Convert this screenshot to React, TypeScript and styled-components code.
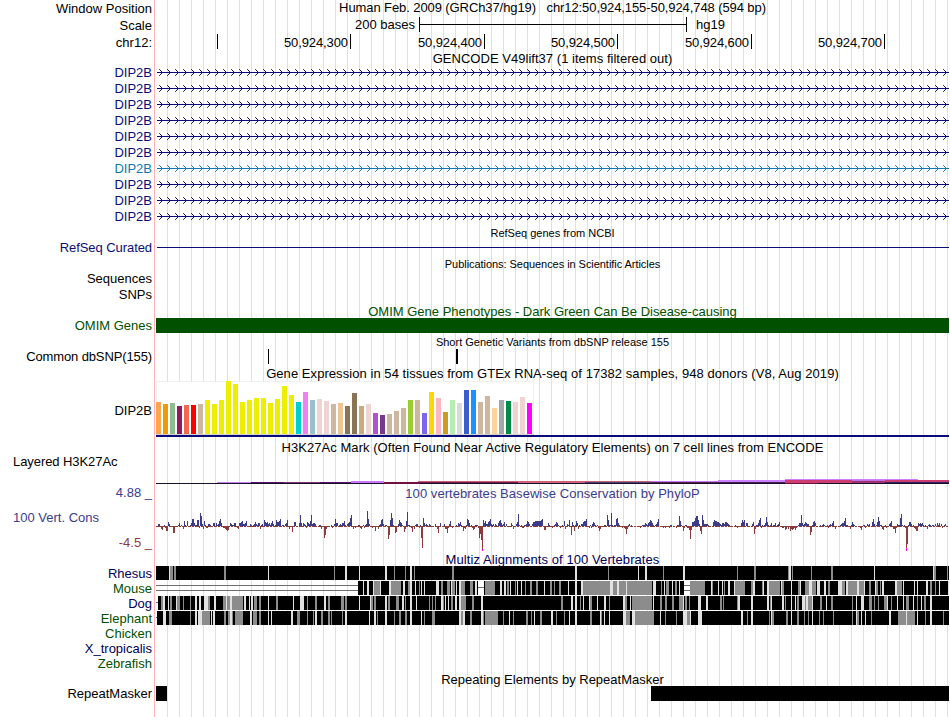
import styled, { createGlobalStyle } from "styled-components";

const GlobalStyle = createGlobalStyle`
  * {
    box-sizing: border-box;
  }

  body {
    margin: 0;
    background: #fff;
    overflow: hidden;
  }
`;

const NAVY = "#0c0c78";
const DARK_NAVY = "#00005a";
const GREEN = "#005000";
const BLUE = "#3c3c8c";
const RED = "#8c3c3c";
const TRACK_WIDTH = 793;

const Browser = styled.main`
  width: 949px;
  height: 717px;
  font-family: "Liberation Sans", Arial, sans-serif;
  font-size: 13px;
  line-height: 15px;
  color: #000;
  white-space: pre;
  background:
    linear-gradient(#ffb4b4, #ffb4b4) 154px 0 / 1px 100% no-repeat,
    repeating-linear-gradient(
        to right,
        #dcdcff 0 1px,
        transparent 1px 12px
      )
      167px 0 / 782px 100% no-repeat;
`;

const Row = styled.div<{ $height?: number }>`
  display: grid;
  grid-template-columns: 152px ${TRACK_WIDTH}px;
  column-gap: 4px;
  height: ${(p) => p.$height ?? 16}px;
`;

const Label = styled.div<{
  $color?: string;
  $top?: number;
  $left?: boolean;
  $spacing?: number;
}>`
  padding-top: ${(p) => p.$top ?? 0}px;
  padding-left: ${(p) => (p.$left ? 13 : 0)}px;
  text-align: ${(p) => (p.$left ? "left" : "right")};
  color: ${(p) => p.$color ?? "#000"};
  letter-spacing: ${(p) => p.$spacing ?? 0}px;
`;

const Title = styled.div<{
  $color?: string;
  $small?: boolean;
  $height?: number;
  $top?: number;
  $spacing?: number;
}>`
  height: ${(p) => p.$height ?? 15}px;
  padding-top: ${(p) => p.$top ?? 0}px;
  text-align: center;
  color: ${(p) => p.$color ?? "#000"};
  font-size: ${(p) => (p.$small ? 11 : 13)}px;
  line-height: ${(p) => (p.$small ? 16 : 15)}px;
  letter-spacing: ${(p) => p.$spacing ?? 0}px;
`;

const TrackTitle = styled(Title)`
  margin-left: 156px;
`;

const ScaleLine = styled.div`
  display: flex;
`;

const ScaleText = styled.span<{ $before?: boolean }>`
  width: ${(p) => (p.$before ? "263px" : "auto")};
  padding-right: ${(p) => (p.$before ? 4 : 0)}px;
  padding-left: ${(p) => (p.$before ? 0 : 9)}px;
  text-align: right;
`;

const ScaleBar = styled.span`
  width: 268px;
  height: 15px;
  border: solid #000;
  border-width: 0 1px;
  background: linear-gradient(#000, #000) 0 7px / 100% 1px no-repeat;
`;

const Ruler = styled.div`
  display: flex;
`;

const RulerCell = styled.span<{ $width: number }>`
  width: ${(p) => p.$width}px;
  height: 15px;
  padding-right: 2px;
  border-right: 1px solid #000;
  text-align: right;
  line-height: 17px;
  letter-spacing: -0.1px;
`;

const Plot = styled.svg`
  display: block;
  shape-rendering: crispEdges;
`;

const Arrows = styled.svg`
  display: block;
`;

const Line = styled.div`
  height: 1px;
  margin: 7px 0 0 1px;
  background: ${NAVY};
`;

const Block = styled.div<{ $color?: string; $width?: number }>`
  width: ${(p) => (p.$width ? `${p.$width}px` : "100%")};
  height: 15px;
  background: ${(p) => p.$color ?? "#000"};
`;

const Spread = styled.div`
  display: flex;
  justify-content: space-between;
`;

const Limits = styled.div`
  display: flex;
  flex-direction: column;
`;

const genes = [
  NAVY, NAVY, NAVY, NAVY, NAVY, NAVY, "#1278b4", NAVY, NAVY, NAVY,
];

const ruler = [
  { width: 62, text: "" },
  { width: 133, text: "50,924,300" },
  { width: 134, text: "50,924,400" },
  { width: 133, text: "50,924,500" },
  { width: 134, text: "50,924,600" },
  { width: 133, text: "50,924,700" },
];

// [height, color] for every GTEx tissue
const tissues: [number, string][] = [
  [32, "#ffa54f"], [30, "#ee9a00"], [31, "#8fbc8f"], [28, "#8b1c62"],
  [29, "#ee6a50"], [29, "#ff0000"], [30, "#cdb79e"], [34, "#eeee00"],
  [30, "#eeee00"], [34, "#eeee00"], [53, "#eeee00"], [50, "#eeee00"],
  [32, "#eeee00"], [34, "#eeee00"], [36, "#eeee00"], [36, "#eeee00"],
  [31, "#eeee00"], [35, "#eeee00"], [48, "#eeee00"], [39, "#eeee00"],
  [32, "#00cdcd"], [42, "#ee82ee"], [34, "#9ac0cd"], [35, "#eed5d2"],
  [33, "#eed5d2"], [30, "#cdb79e"], [31, "#eec591"], [28, "#8b7355"],
  [41, "#8b7355"], [28, "#cdaa7d"], [30, "#eed5d2"], [21, "#b452cd"],
  [19, "#7a378b"], [20, "#cdb79e"], [23, "#cdb79e"], [26, "#cdb79e"],
  [34, "#9acd32"], [34, "#cdb79e"], [21, "#7a67ee"], [42, "#ffd700"],
  [36, "#ffb6c1"], [22, "#cd9b1d"], [34, "#b4eeb4"], [31, "#d9d9d9"],
  [44, "#3a5fcd"], [44, "#1e90ff"], [32, "#cdb79e"], [38, "#cdb79e"],
  [26, "#ffd39b"], [34, "#a6a6a6"], [33, "#008b45"], [32, "#eed5d2"],
  [37, "#eed5d2"], [31, "#ff00ff"],
];

// [x, y, width, height, color]
const acetylation: [number, number, number, number, string][] = [
  [61, 4, 34, 1, "#c080f0"],
  [95, 4, 133, 1, "#581068"],
  [128, 4, 36, 1, "#803070"],
  [195, 3, 33, 2, "#c878f8"],
  [228, 4, 36, 2, "#701040"],
  [262, 3, 100, 1, "#c86078"],
  [264, 4, 98, 1, "#781848"],
  [362, 3, 67, 2, "#d0607c"],
  [429, 3, 66, 1, "#c86078"],
  [429, 4, 66, 1, "#504070"],
  [495, 3, 67, 1, "#c878ff"],
  [495, 4, 67, 1, "#58204c"],
  [562, 2, 67, 2, "#cc80ff"],
  [562, 4, 67, 1, "#402050"],
  [629, 1, 133, 1, "#cc80ff"],
  [629, 2, 67, 3, "#cc3c70"],
  [696, 2, 33, 1, "#c070e8"],
  [696, 3, 33, 2, "#a03070"],
  [729, 2, 64, 2, "#cc3c70"],
  [729, 4, 64, 1, "#302060"],
  [629, 5, 33, 1, "#701040"],
];

// runs of scores: first entry is the start base, the rest are bar heights
const conservation: number[][] = [
  [2, 2, 2, -1, -3, -4, -1, 1, -2, -5, -5, 4, 2],
  [17, -7, -7], [22, 1, 3, -1, 1, -1, -3, 5, 1, -1, 5],
  [34, 1, 3, 7, 7, 3, 1, 1, 6, 6, -2, 13, 10, 2, -3, 5, 1, -2, -2, 2, 2, 1],
  [57, 3, 3, -1, 3, 1, 2, 5, 7, 3, -1, -2, -2, -3, -4, -5, -4, -1, 3, 2, 1, 1, 3, 3, -1, -2, -3, 3, 3, 4, 5, 2, 2, 3, 5],
  [92, -1, -1, 2, 1, -1, 1, 2, 4, 2, 1, 3, 3, -3, 1, 2, -1, 6, 4, 3, 4, 2, 3, 1, 3, 5, 2, -1, 1, 6, 4, 4, 5, 7],
  [126, 1, 1, -1, 2, 3, 6, -1, -3, -1, -1, -6, -1, 4, 4],
  [143, 3, 11, 3, -1, 3, 2, 1, -2, 4, 3, 2, 5, 11, 2, 3, 3, 2],
  [163, 1, 1, -3, -1, -1, -12, -9, -3],
  [175, 1, -2, -1, 2, 7, 3, 3, -1, 1, 2, 1, 3, 3, 5, 1, -1, 2, 3, 4, 8, 11],
  [196, -1, -3, -1, -2, -1, -1, 1, 1, -2, -3, -1, 1, -2, 1, 2, 15, 7, 2, -1, -1, -2, -1, -1, -5],
  [220, -1, -1, -3, 1, 2, 6, 7, 2, -1, 1, 1, -1, -13, -9, 6, 13, 8, 1, -1, -7, -6, -1, 2, 6, 4],
  [245, 3, 1, -1, -6, -3, 5, 14],
  [252, 1, 1, -1, -2, -6, -1, -3, 1, 2, 2, -1, -2],
  [264, 1, -12, -22, 8, 3, 1, 2, 1, -1, 2, 1, -1],
  [279, 2, -1, -3, -7, -1, 3],
  [288, 2, -3, -3, -7, -2, 2, 5, -1, -2, -1],
  [300, 1, -1, 3, 2, 4, 1, -1, -5, -2, -3, 1, 7, 6, 3, -1, 1, -2, -4, -3, 1, 1, 1, -2, -12, -8, -14, -24, 6, 3, 5, 2],
  [331, 2, 4, 5, 7, 2, 1, 2, -1, 2, 1, -1, 3, 5, 6, 3, 1, 2, 4, -1, 2],
  [355, 3, 1, -3, -1, -1, 2, 4, 12, 1, -1, 1, -2, -2, 1, 1, 2, 5, 4, 2, -1],
  [376, 2, 4, 4, 5, 5, 5, 5, 5, 5, 6, 7, -1, -4, -4, -1],
  [392, 3, 1, -1, -1, -2, -1, 1, 2, 4, 3, 1, -1, -2, -1, 1, -1, 5, -3, -1, 2, 1, 6, -1, -9, 4, 1, -5, 1, 5, 3, -3, 1, -1, 2, 2, 4, 5, 5, 7],
  [432, -1, -2, 1, -2, 2, 4, 3, 1, -1, 1, -2, -5, -3],
  [447, -1, 1, 1, -1, 11, 6, 1, 1, 13, 1, -1, 1, 1, 7, 8, 3, 1, -1, -1, -2, -1, -2, -3, -8, -3, 1, 2, -1, 1],
  [484, -2, -1, 1, 1, 1, 3, 2, 1, 3, 4, 6, 5, 3, 1, -1, 1, 2, 4, 7],
  [506, -1, -2, -1, -2, -1, -1, -1, -2, 1, 1],
  [520, -2, 1, 1, 10],
  [524, 5, 1, -1, -5, -2, 1, 1, -2, -2, -4, -13, -4, 4, 4, 5, 8, 10, 10, 6, 2, -5, -8, 11, 6, 2, 2, 2, 2, 1, -1],
  [557, 4, 6, 5, 5, 4, 4, 3, 2, 1, 3, 3, 2, 4, 4, 3, 2, 1],
  [579, 1, -1, -2, -1, -1, -1, 3, 6, 4, 6, -1, 3, 3, -1],
  [596, 2, 4, -8, -3, 1, 1, 3, 6, 8, -2, 1, -1, 1, 3, 9, 4, 1, -1, 1, 3, -1, 1, 1, 3, -1, 1, 2, 4],
  [626, -2, -2, -1, -4, -3, -1, -3, -1, -5, -3, -4, -3, -2, -4, -2, -1, 1, 3, 3, 11, 3, 1, 2, 4, 3, 2, 2, -1, -9, -6, 1, 4, 5, 3],
  [664, 1, -1, 1, 2, 1, -1, -1, 1, -2, 1, 2, 1, 3, 5, -1, -3, -1],
  [684, 1, 2, 3, 3, 5, 8, 1, 1, -1, -1, -3, 1, 4, 2, 1],
  [704, -2, -4, -1, 1, 1, -2, -1, 2, 1, 2],
  [716, 4, 7, 2, -1, 1, 4, 9, 5, 1, 1, -3, -4, -1, 1, -2, -1, -1, 2, 3, 5, -1, -3, -3, -7, -2, 2, 1],
  [743, 1, 8, 12, 1, -1, 1, -2, -22, -18],
  [752, 1, 4, 4, 2, -1, 1, -2, -3, -5, -5, 3, 2, 3, 2, 3, 1],
  [769, 1, -1, -3, 1, 2, 1, -1, 1, 1, -1, 2, -1, 3, 1, 3, -1, 2, -2, -1, 1, 2],
];

type Species = {
  name: string;
  color: string;
  start: number;
  light: [number, number][];
  grey: [number, number][];
  gaps?: [number, number, number[]][];
};

// spans are [start, width] measured from the left side of the window
const species: Species[] = [
  {
    name: "Rhesus",
    color: DARK_NAVY,
    start: 0,
    light: [[13, 1], [112, 1], [189, 2], [203, 1], [229, 2], [254, 2], [419, 2], [482, 1], [489, 2], [527, 2], [633, 2], [718, 1], [777, 1]],
    grey: [[14, 3], [18, 2], [68, 2], [178, 1], [238, 1], [249, 1], [258, 1], [296, 2], [452, 1], [507, 1], [581, 1], [598, 2], [632, 1], [636, 1], [655, 1], [675, 2], [778, 2], [791, 1]],
  },
  {
    name: "Mouse",
    color: GREEN,
    start: 202,
    light: [[207, 1], [211, 2], [217, 1], [224, 1], [233, 2], [247, 2], [254, 2], [259, 1], [265, 1], [268, 1], [280, 3], [295, 1], [300, 1], [303, 2], [319, 2], [344, 2], [348, 2], [354, 1], [361, 1], [365, 1], [388, 1], [412, 1], [419, 2], [425, 2], [454, 3], [461, 2], [470, 1], [497, 3], [508, 1], [516, 1], [523, 1], [555, 1], [562, 1], [566, 1], [572, 2], [578, 1], [597, 2], [607, 1], [611, 2], [625, 1], [635, 1], [644, 1], [653, 3], [661, 3], [668, 2], [682, 4], [690, 2], [701, 2], [708, 1], [719, 1], [726, 2], [739, 2], [747, 1], [758, 1], [761, 1], [770, 2], [783, 1], [792, 1]],
    grey: [[218, 6], [235, 10], [252, 2], [263, 1], [285, 2], [291, 3], [296, 3], [305, 4], [314, 3], [329, 10], [351, 2], [359, 1], [369, 1], [374, 2], [380, 2], [394, 2], [398, 1], [403, 2], [427, 27], [457, 4], [463, 7], [471, 25], [505, 1], [510, 3], [519, 2], [534, 15], [556, 1], [568, 1], [579, 10], [595, 2], [606, 1], [613, 11], [626, 2], [642, 2], [649, 4], [656, 4], [672, 2], [686, 3], [692, 9], [703, 5], [713, 2], [720, 2], [724, 1], [741, 5], [774, 2], [779, 1]],
    gaps: [[0, 202, [4, 9]], [322, 6, [6]], [528, 6, [4, 9]]],
  },
  {
    name: "Dog",
    color: DARK_NAVY,
    start: 2,
    light: [[7, 2], [12, 1], [20, 1], [39, 2], [43, 2], [48, 4], [58, 2], [70, 1], [74, 2], [88, 2], [93, 1], [95, 2], [112, 1], [137, 1], [144, 4], [168, 2], [203, 1], [214, 1], [229, 2], [246, 2], [254, 2], [260, 1], [285, 2], [289, 1], [292, 1], [299, 2], [303, 2], [325, 2], [415, 2], [419, 2], [427, 1], [433, 1], [441, 1], [448, 2], [467, 2], [474, 1], [497, 1], [527, 1], [542, 3], [550, 2], [582, 2], [595, 2], [611, 2], [615, 1], [626, 2], [635, 1], [639, 1], [646, 3], [650, 2], [656, 1], [670, 1], [700, 1], [705, 3], [731, 1], [741, 1], [747, 1], [757, 1], [765, 1], [774, 2]],
    grey: [[5, 2], [14, 2], [21, 3], [27, 1], [34, 1], [52, 2], [67, 3], [71, 3], [76, 11], [98, 3], [103, 2], [120, 2], [151, 1], [159, 2], [172, 2], [185, 3], [189, 2], [215, 2], [218, 2], [232, 2], [240, 3], [249, 1], [273, 1], [276, 1], [279, 1], [287, 1], [295, 2], [305, 5], [316, 2], [405, 2], [424, 1], [434, 2], [453, 1], [469, 2], [476, 20], [504, 2], [509, 2], [516, 2], [523, 4], [529, 2], [533, 1], [564, 2], [567, 1], [581, 1], [614, 1], [629, 1], [641, 2], [649, 1], [652, 4], [664, 2], [675, 2], [696, 1], [713, 3], [718, 1], [722, 1], [728, 3], [735, 1], [750, 3], [761, 1], [768, 2]],
    gaps: [[0, 2, [6]]],
  },
  {
    name: "Elephant",
    color: GREEN,
    start: 1,
    light: [[7, 3], [39, 2], [42, 4], [55, 1], [57, 2], [74, 2], [94, 2], [112, 1], [115, 1], [135, 2], [159, 2], [189, 2], [213, 1], [218, 2], [229, 2], [254, 2], [265, 1], [303, 2], [307, 2], [325, 2], [353, 1], [378, 1], [395, 2], [413, 1], [419, 2], [444, 1], [448, 1], [453, 1], [467, 3], [476, 3], [504, 1], [527, 4], [534, 1], [542, 4], [585, 2], [595, 2], [615, 1], [635, 1], [656, 1], [700, 1], [705, 1], [709, 1], [733, 2], [750, 1], [761, 1], [774, 2]],
    grey: [[13, 3], [34, 1], [46, 8], [68, 2], [72, 2], [76, 1], [79, 8], [97, 4], [103, 2], [141, 3], [151, 1], [157, 1], [165, 2], [172, 2], [175, 1], [186, 1], [221, 1], [238, 1], [243, 2], [249, 2], [268, 1], [276, 3], [305, 2], [314, 2], [327, 1], [329, 13], [347, 1], [357, 1], [370, 2], [375, 1], [384, 2], [400, 1], [408, 1], [434, 2], [445, 1], [470, 4], [479, 19], [509, 1], [520, 1], [531, 3], [591, 1], [613, 1], [616, 2], [630, 2], [641, 2], [648, 1], [652, 1], [663, 1], [667, 1], [677, 1], [696, 1], [701, 2], [715, 1], [742, 8], [751, 8], [769, 1], [787, 1]],
    gaps: [[0, 1, [6]]],
  },
];

const unaligned = [
  { name: "Chicken", color: GREEN },
  { name: "X_tropicalis", color: DARK_NAVY },
  { name: "Zebrafish", color: GREEN },
];

const GeneArrows = ({ color, id }: { color: string; id: string }) => (
  <Arrows width={TRACK_WIDTH} height={15}>
    <defs>
      <pattern id={id} x="1" y="0" width="8" height="15" patternUnits="userSpaceOnUse">
        <path d="M2.2 4.2L5.5 7.5L2.2 10.8" fill="none" stroke={color} />
      </pattern>
    </defs>
    <rect x="1" width={TRACK_WIDTH - 1} height="15" fill={`url(#${id})`} />
    <rect x="1" y="7" width={TRACK_WIDTH - 1} height="1" fill={color} />
  </Arrows>
);

const Expression = () => (
  <Plot width={TRACK_WIDTH} height={60}>
    <rect x="0" y="1" width="378" height="54" fill="#f0f0f0" />
    <rect x="1" y="2" width="376" height="52" fill="#fff" />
    <rect x="0" y="54" width="378" height="1" fill="#d3d3d3" />
    {tissues.map(([height, color], i) => (
      <rect key={i} x={i * 7} y={54 - height} width="5" height={height} fill={color} />
    ))}
    <rect x="0" y="55" width={TRACK_WIDTH} height="2" fill={NAVY} />
  </Plot>
);

const Acetylation = () => (
  <Plot width={TRACK_WIDTH} height={8}>
    <rect y="5" width={TRACK_WIDTH} height="1" fill="#181028" />
    {acetylation.map(([x, y, width, height, color], i) => (
      <rect key={i} x={x} y={y} width={width} height={height} fill={color} />
    ))}
  </Plot>
);

const Conservation = () => (
  <Plot width={TRACK_WIDTH} height={52}>
    <path d={`M0 26.5H${TRACK_WIDTH}`} stroke={RED} strokeDasharray="5 1 3 1 2 1" />
    {conservation.flatMap(([start, ...scores]) =>
      scores.map((score, i) => (
        <rect
          key={start + i}
          x={start + i}
          y={score > 0 ? 26 - score : 26}
          width="1"
          height={Math.abs(score)}
          fill={score > 0 ? BLUE : RED}
        />
      )),
    )}
    <rect x="326" y="49" width="1" height="2" fill="#ff00ff" />
    <rect x="750" y="48" width="1" height="3" fill="#ff00ff" />
  </Plot>
);

const Alignment = ({ item }: { item: Species }) => (
  <Plot width={TRACK_WIDTH} height={14}>
    <rect x={item.start} width={TRACK_WIDTH - item.start} height="14" />
    {item.light.map(([x, width]) => (
      <rect key={x} x={x} width={width} height="14" fill="#e1e1e1" />
    ))}
    {item.grey.map(([x, width]) => (
      <rect key={x} x={x} width={width} height="14" fill="#8c8c8c" />
    ))}
    {item.gaps?.map(([x, width, lines]) => (
      <g key={x}>
        {x > 0 && <rect x={x} width={width} height="14" fill="#fff" />}
        {lines.map((y) => (
          <rect key={y} x={x} y={y} width={width} height="1" fill="#6e6e6e" />
        ))}
      </g>
    ))}
  </Plot>
);

const App = () => (
  <>
    <GlobalStyle />
    <Browser>
      <Row $height={17}>
        <Label $top={1}>Window Position</Label>
        <Title $height={17} $spacing={-0.09}>
          {"Human Feb. 2009 (GRCh37/hg19)   chr12:50,924,155-50,924,748 (594 bp)"}
        </Title>
      </Row>
      <Row $height={17}>
        <Label $top={1}>Scale</Label>
        <ScaleLine>
          <ScaleText $before>200 bases</ScaleText>
          <ScaleBar />
          <ScaleText>hg19</ScaleText>
        </ScaleLine>
      </Row>
      <Row $height={17}>
        <Label $top={1}>chr12:</Label>
        <Ruler>
          {ruler.map((cell) => (
            <RulerCell key={cell.text} $width={cell.width}>
              {cell.text}
            </RulerCell>
          ))}
        </Ruler>
      </Row>
      <TrackTitle $height={14} $spacing={0.03}>
        GENCODE V49lift37 (1 items filtered out)
      </TrackTitle>
      {genes.map((color, i) => (
        <Row key={i}>
          <Label $color={color}>DIP2B</Label>
          <GeneArrows color={color} id={`gene-${i}`} />
        </Row>
      ))}

      <TrackTitle $small>RefSeq genes from NCBI</TrackTitle>
      <Row>
        <Label $color={NAVY} $spacing={-0.07}>
          RefSeq Curated
        </Label>
        <Line />
      </Row>

      <TrackTitle $small $spacing={-0.05}>
        Publications: Sequences in Scientific Articles
      </TrackTitle>
      <Row>
        <Label>Sequences</Label>
      </Row>
      <Row>
        <Label>SNPs</Label>
      </Row>

      <TrackTitle $color={GREEN} $top={1}>
        OMIM Gene Phenotypes - Dark Green Can Be Disease-causing
      </TrackTitle>
      <Row>
        <Label $color={GREEN}>OMIM Genes</Label>
        <Block $color={GREEN} />
      </Row>

      <TrackTitle $small>Short Genetic Variants from dbSNP release 155</TrackTitle>
      <Row>
        <Label $spacing={-0.12}>Common dbSNP(155)</Label>
        <Plot width={TRACK_WIDTH} height={15}>
          <rect x="112" width="1" height="15" />
          <rect x="300" width="2" height="15" />
        </Plot>
      </Row>

      <TrackTitle $top={1} $spacing={0.06}>
        Gene Expression in 54 tissues from GTEx RNA-seq of 17382 samples, 948
        donors (V8, Aug 2019)
      </TrackTitle>
      <Row $height={60}>
        <Label $top={23}>DIP2B</Label>
        <Expression />
      </Row>

      <TrackTitle $height={14} $spacing={0.05}>
        H3K27Ac Mark (Often Found Near Active Regulatory Elements) on 7 cell
        lines from ENCODE
      </TrackTitle>
      <Row $height={24}>
        <Label $left $spacing={-0.07}>
          Layered H3K27Ac
        </Label>
      </Row>
      <Row $height={7}>
        <span />
        <Acetylation />
      </Row>

      <Row $height={67}>
        <Limits>
          <Label $color={BLUE}>4.88 _</Label>
          <Label $left $color={BLUE} $top={10}>
            100 Vert. Cons
          </Label>
          <Label $color={RED} $top={10}>
            -4.5 _
          </Label>
        </Limits>
        <div>
          <Title $color={BLUE} $top={1} $spacing={0.05}>
            100 vertebrates Basewise Conservation by PhyloP
          </Title>
          <Conservation />
        </div>
      </Row>

      <TrackTitle $color={DARK_NAVY} $height={14} $spacing={0.08}>
        Multiz Alignments of 100 Vertebrates
      </TrackTitle>
      {species.map((item) => (
        <Row key={item.name} $height={15}>
          <Label $color={item.color}>{item.name}</Label>
          <Alignment item={item} />
        </Row>
      ))}
      {unaligned.map((item) => (
        <Row key={item.name} $height={15}>
          <Label $color={item.color}>{item.name}</Label>
        </Row>
      ))}

      <TrackTitle $top={1}>Repeating Elements by RepeatMasker</TrackTitle>
      <Row>
        <Label>RepeatMasker</Label>
        <Spread>
          <Block $width={11} />
          <Block $width={298} />
        </Spread>
      </Row>
    </Browser>
  </>
);

export default App;
